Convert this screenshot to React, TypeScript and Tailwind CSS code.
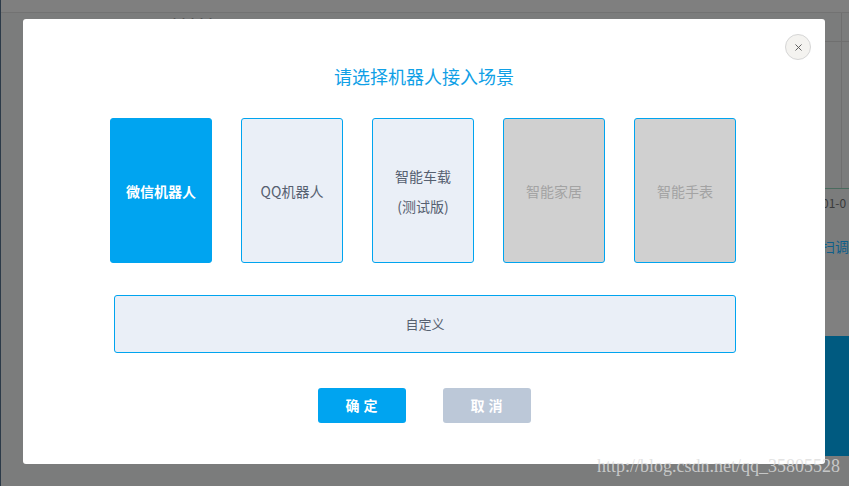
import { X } from "lucide-react";

const cards = [
  { title: "微信机器人", kind: "active" },
  { title: "QQ机器人", kind: "normal" },
  { title: "智能车载", sub: "(测试版)", kind: "normal" },
  { title: "智能家居", kind: "disabled" },
  { title: "智能手表", kind: "disabled" },
];

function Card({ title, sub, kind }: { title: string; sub?: string; kind: string }) {
  const cls =
    kind === "active"
      ? "bg-[#00a4f0] text-white font-bold border-[#00a4f0]"
      : kind === "disabled"
      ? "bg-[#d0d0d0] text-[#a3a3a3] border-[#00a4ef]"
      : "bg-[#eaeff7] text-[#566070] border-[#00a4ef]";
  return (
    <div
      className={`w-[102px] h-[145px] rounded-[3px] border flex flex-col items-center justify-center text-[14px] leading-[30px] ${cls}`}
    >
      <span>{title}</span>
      {sub && <span>{sub}</span>}
    </div>
  );
}

function BackPage() {
  return (
    <div className="flex flex-col h-full border-l border-[#2c3a48]">
      <div className="h-[13px] bg-[#7f7f7f] border-b border-[#727272]" />
      <div className="flex flex-1">
        <div className="w-[824px] pl-[169px] pt-[1px] text-[9px] leading-none text-[#555]">
          ·····
        </div>
        <div className="flex-1 flex flex-col">
          <div className="h-[29px] border-b border-[#6f6f6f] flex justify-end pr-[7px]">
            <div className="w-px bg-[#6f6f6f]" />
          </div>
          <div className="h-[146px] flex justify-end pr-[7px]">
            <div className="w-px bg-[#6f6f6f]" />
          </div>
          <div className="h-px bg-[#4a6b5e]" />
          <div className="mt-[4px] pl-[1px] text-[12px] leading-[20px] text-[#3a3a3a] whitespace-nowrap">01-0</div>
          <div className="mt-[23px] text-[14px] leading-[20px] text-[#0e5f8a] whitespace-nowrap">扫调</div>
          <div className="mt-[24px] h-[56px] bg-[#808080]" />
          <div className="h-[120px] bg-[#005a80]" />
        </div>
      </div>
    </div>
  );
}

export default function App() {
  return (
    <div
      className="relative w-[849px] h-[486px] overflow-hidden bg-[#7b7c7c]"
      style={{ fontFamily: '"Microsoft YaHei", "Noto Sans CJK SC", sans-serif' }}
    >
      <BackPage />

      {/* modal */}
      <div className="absolute left-[23px] top-[19px] w-[802px] h-[445px] bg-white rounded-[3px] flex flex-col items-center">
        <button className="absolute right-[14px] top-[15px] w-[26px] h-[26px] rounded-full bg-[#f4f3f0] border border-[#d6d6d6] flex items-center justify-center text-[#555]">
          <X size={11} strokeWidth={2} />
        </button>
        <h2 className="mt-[45px] text-[18px] leading-[24px] text-[#10a0e6]">请选择机器人接入场景</h2>
        <div className="mt-[30px] flex gap-[29px] ml-[-2px]">
          {cards.map((c) => (
            <Card key={c.title} {...c} />
          ))}
        </div>
        <div className="mt-[32px] ml-[2px] w-[622px] h-[58px] rounded-[3px] border border-[#00a4ef] bg-[#eaeff7] flex items-center justify-center text-[13px] text-[#566070]">
          自定义
        </div>
        <div className="mt-[35px] flex gap-[37px]">
          <button className="w-[88px] h-[35px] rounded-[3px] bg-[#00a4f0] text-white text-[14px] font-bold tracking-[4px] pl-[4px]">
            确定
          </button>
          <button className="w-[88px] h-[35px] rounded-[3px] bg-[#bcc8d8] text-white text-[14px] font-bold tracking-[4px] pl-[4px]">
            取消
          </button>
        </div>
      </div>

      {/* watermark */}
      <div
        className="absolute left-[597px] top-[453px] text-[18px] text-[#dcdcdc]/80 whitespace-nowrap"
        style={{ fontFamily: '"Liberation Serif", serif' }}
      >
        http://blog.csdn.net/qq_35805528
      </div>
    </div>
  );
}
